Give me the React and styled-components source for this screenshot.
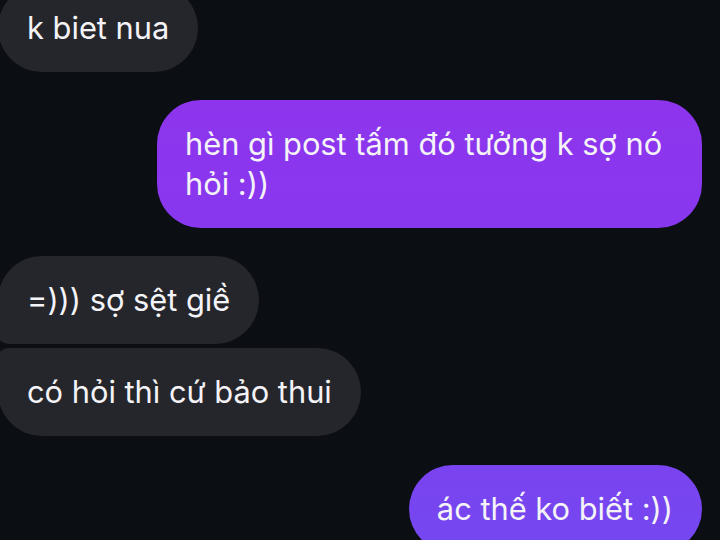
import React from "react";
import styled, { createGlobalStyle } from "styled-components";

const Global = createGlobalStyle`
  html, body { margin: 0; padding: 0; background: #0b0e13; }
  body { width: 720px; height: 540px; overflow: hidden; }
`;

const Thread = styled.div`
  width: 720px;
  height: 540px;
  overflow: hidden;
  background: #0b0e13;
  font-family: Inter, "Noto Sans", sans-serif;
  display: flex;
  flex-direction: column;
  padding: 0 18px 0 0;
  box-sizing: border-box;
`;

const Bubble = styled.div`
  box-sizing: border-box;
  flex-shrink: 0;
  font-size: 30.8px;
  line-height: 40px;
  color: #f4f3f7;
  padding: 24px 29px 24px ${(p) => (p.$mine ? 28 : 29)}px;
  max-width: 545px;
  border-radius: 44px;
  align-self: ${(p) => (p.$mine ? "flex-end" : "flex-start")};
  margin-top: ${(p) => p.$gap}px;
  margin-left: ${(p) => (p.$mine ? 0 : -2)}px;
  background: ${(p) =>
    p.$mine
      ? "linear-gradient(to bottom, #9233ec 0px, #8738ef 250px, #7547f0 540px) fixed"
      : "#25262b"};
  ${(p) =>
    !p.$mine &&
    p.$joinBottom &&
    `border-bottom-left-radius: 10px;`}
  ${(p) =>
    !p.$mine &&
    p.$joinTop &&
    `border-top-left-radius: 10px;`}
`;

export default function App() {
  return (
    <>
      <Global />
      <Thread>
        <Bubble $gap={-16}>k biet nua</Bubble>
        <Bubble $mine $gap={28}>
          hèn gì post tấm đó tưởng k sợ nó hỏi :))
        </Bubble>
        <Bubble $gap={28} $joinBottom>
          =))) sợ sệt giề
        </Bubble>
        <Bubble $gap={4} $joinTop>
          có hỏi thì cứ bảo thui
        </Bubble>
        <Bubble $mine $gap={29}>
          ác thế ko biết :))
        </Bubble>
      </Thread>
    </>
  );
}
